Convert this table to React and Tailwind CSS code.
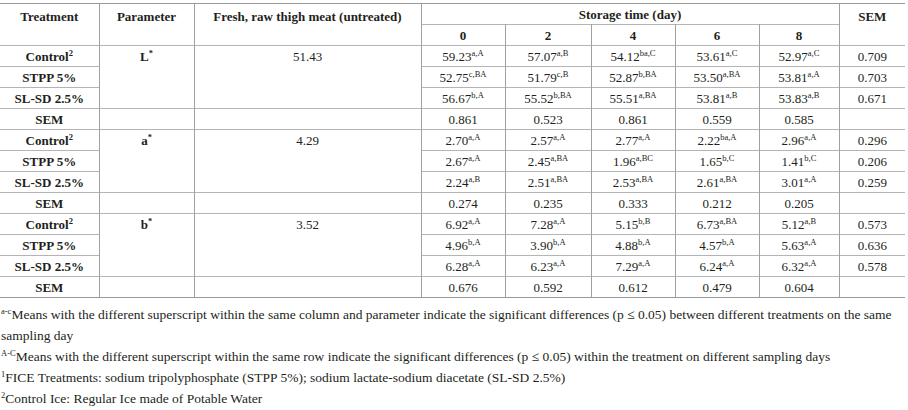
import React from "react";

const groups = [
  {
    param: "L",
    fresh: "51.43",
    rows: [
      { name: "Control", note: "2", vals: [["59.23", "a,A"], ["57.07", "a,B"], ["54.12", "ba,C"], ["53.61", "a,C"], ["52.97", "a,C"]], sem: "0.709" },
      { name: "STPP 5%", vals: [["52.75", "c,BA"], ["51.79", "c,B"], ["52.87", "b,BA"], ["53.50", "a,BA"], ["53.81", "a,A"]], sem: "0.703" },
      { name: "SL-SD 2.5%", vals: [["56.67", "b,A"], ["55.52", "b,BA"], ["55.51", "a,BA"], ["53.81", "a,B"], ["53.83", "a,B"]], sem: "0.671" },
    ],
    sem: ["0.861", "0.523", "0.861", "0.559", "0.585"],
  },
  {
    param: "a",
    fresh: "4.29",
    rows: [
      { name: "Control", note: "2", vals: [["2.70", "a,A"], ["2.57", "a,A"], ["2.77", "a,A"], ["2.22", "ba,A"], ["2.96", "a,A"]], sem: "0.296" },
      { name: "STPP 5%", vals: [["2.67", "a,A"], ["2.45", "a,BA"], ["1.96", "a,BC"], ["1.65", "b,C"], ["1.41", "b,C"]], sem: "0.206" },
      { name: "SL-SD 2.5%", vals: [["2.24", "a,B"], ["2.51", "a,BA"], ["2.53", "a,BA"], ["2.61", "a,BA"], ["3.01", "a,A"]], sem: "0.259" },
    ],
    sem: ["0.274", "0.235", "0.333", "0.212", "0.205"],
  },
  {
    param: "b",
    fresh: "3.52",
    rows: [
      { name: "Control", note: "2", vals: [["6.92", "a,A"], ["7.28", "a,A"], ["5.15", "b,B"], ["6.73", "a,BA"], ["5.12", "a,B"]], sem: "0.573" },
      { name: "STPP 5%", vals: [["4.96", "b,A"], ["3.90", "b,A"], ["4.88", "b,A"], ["4.57", "b,A"], ["5.63", "a,A"]], sem: "0.636" },
      { name: "SL-SD 2.5%", vals: [["6.28", "a,A"], ["6.23", "a,A"], ["7.29", "a,A"], ["6.24", "a,A"], ["6.32", "a,A"]], sem: "0.578" },
    ],
    sem: ["0.676", "0.592", "0.612", "0.479", "0.604"],
  },
];

const Sup = ({ children }) => (
  <span className="align-[5px] text-[8.5px] leading-none">{children}</span>
);

const td = "h-[21px] p-0 text-center align-middle border-t border-[#b4b4b4]";
const vr = "border-r border-r-[#a0a0a0]";

export default function App() {
  return (
    <div className="w-[908px] h-[410px] overflow-hidden bg-white pt-[3px] text-[#231f20] text-[13px] font-['Liberation_Serif','Times_New_Roman',serif]">
      <table className="table-fixed border-collapse w-[905px] leading-[15px]">
        <colgroup>
          <col className="w-[99px]" />
          <col className="w-[95px]" />
          <col className="w-[227px]" />
          <col className="w-[84px]" />
          <col className="w-[86px]" />
          <col className="w-[84px]" />
          <col className="w-[84px]" />
          <col className="w-[80px]" />
          <col className="w-[66px]" />
        </colgroup>
        <thead className="font-bold">
          <tr className="border-t border-[#999]">
            <th rowSpan={2} className={`p-0 pt-[5px] align-top ${vr}`}>Treatment</th>
            <th rowSpan={2} className={`p-0 pt-[5px] align-top ${vr}`}>Parameter</th>
            <th rowSpan={2} className={`p-0 pt-[5px] align-top ${vr}`}>Fresh, raw thigh meat (untreated)</th>
            <th colSpan={5} className={`h-[21px] p-0 align-middle ${vr}`}>Storage time (day)</th>
            <th rowSpan={2} className="p-0 pt-[5px] align-top">SEM</th>
          </tr>
          <tr>
            {["0", "2", "4", "6", "8"].map((d) => (
              <th key={d} className={`${td} ${vr}`}>{d}</th>
            ))}
          </tr>
        </thead>
        <tbody>
          {groups.map((g) => (
            <React.Fragment key={g.param}>
              {g.rows.map((r, i) => (
                <tr key={r.name}>
                  <td className={`${td} ${vr} font-bold`}>
                    {r.name}
                    {r.note && <Sup>{r.note}</Sup>}
                  </td>
                  {i === 0 && (
                    <>
                      <td rowSpan={3} className={`p-0 pt-[3px] text-center align-top border-t border-[#b4b4b4] ${vr} font-bold`}>
                        {g.param}
                        <Sup>*</Sup>
                      </td>
                      <td rowSpan={3} className={`p-0 pt-[3px] text-center align-top border-t border-[#b4b4b4] ${vr}`}>
                        {g.fresh}
                      </td>
                    </>
                  )}
                  {r.vals.map(([v, s], j) => (
                    <td key={j} className={`${td} ${vr}`}>
                      {v}
                      <Sup>{s}</Sup>
                    </td>
                  ))}
                  <td className={td}>{r.sem}</td>
                </tr>
              ))}
              <tr>
                <td className={`${td} ${vr} font-bold`}>SEM</td>
                <td className={`${td} ${vr}`} />
                <td className={`${td} ${vr}`} />
                {g.sem.map((v, j) => (
                  <td key={j} className={`${td} ${vr}`}>{v}</td>
                ))}
                <td className={td} />
              </tr>
            </React.Fragment>
          ))}
          <tr>
            <td colSpan={9} className="p-0 border-t border-[#999]" />
          </tr>
        </tbody>
      </table>

      <div className="mt-[6px] pl-[1px] text-[13.5px] leading-[21px]">
        <p>
          <Sup>a-c</Sup>Means with the different superscript within the same column and parameter indicate the significant differences (p ≤ 0.05) between different treatments on the same sampling day
        </p>
        <p>
          <Sup>A-C</Sup>Means with the different superscript within the same row indicate the significant differences (p ≤ 0.05) within the treatment on different sampling days
        </p>
        <p>
          <Sup>1</Sup>FICE Treatments: sodium tripolyphosphate (STPP 5%); sodium lactate-sodium diacetate (SL-SD 2.5%)
        </p>
        <p>
          <Sup>2</Sup>Control Ice: Regular Ice made of Potable Water
        </p>
      </div>
    </div>
  );
}
